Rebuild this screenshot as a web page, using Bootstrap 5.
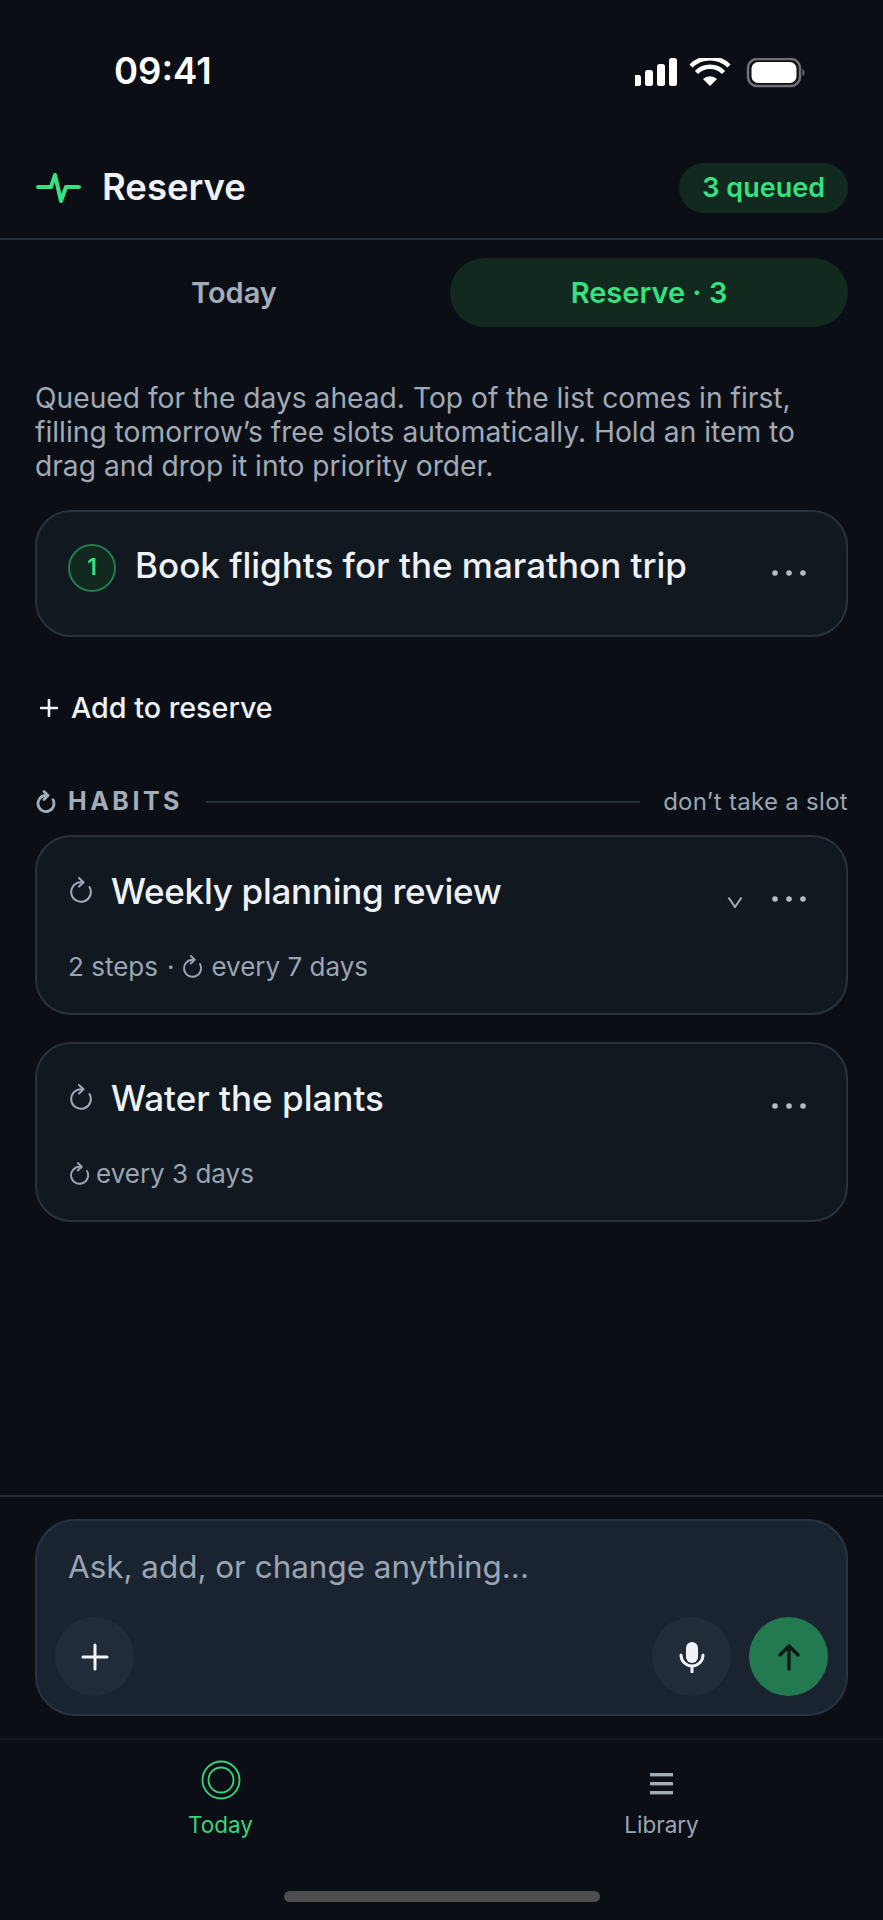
<!DOCTYPE html>
<html lang="en">
<head>
    <meta charset="UTF-8">
    <meta name="viewport" content="width=device-width, initial-scale=1.0">
    <title>Reserve</title>
    <link href="https://cdn.jsdelivr.net/npm/bootstrap@5.3.3/dist/css/bootstrap.min.css" rel="stylesheet">
    <style>
        html, body { height: 100%; }
        body {
            background-color: #0b0f15;
            font-family: Inter, "Liberation Sans", sans-serif;
            color: #f1f4f9;
        }
        .app-screen { height: 1920px; }
        .status-bar { height: 122px; padding: 20px 76px 0 114px; }
        .status-time { font-size: 36.5px; font-weight: 600; color: #fff; line-height: 1; }
        .status-icons { margin-top: 4px; }
        .app-header { height: 118px; padding: 16px 35px 0 36px; border-bottom: 2px solid #262e39; }
        .app-title { font-size: 36.5px; font-weight: 600; margin: 0 0 0 21px; color: #eef1f6; }
        .queued-pill {
            height: 50px; padding: 0 23px; font-size: 27px; font-weight: 600;
            color: #34e27f; background: #11291f; border-radius: 25px;
        }
        .tab-row { padding: 18px 35px 0 35px; gap: 20px; }
        .tab-item {
            height: 69px; flex: 1 1 0; font-size: 29px; font-weight: 600;
            color: #a3adba; border-radius: 35px; padding: 0 0 0 3px;
        }
        .tab-item.is-on { background: #11291f; color: #34e27f; padding: 0; }
        .tab-row .tab-item.is-on { flex: 0 0 398px; }
        .page-main { padding: 0 35px; flex: 1 1 0; min-height: 0; }
        .intro-text {
            font-size: 28.2px; line-height: 34.2px; color: #a0aab7; margin: 54px 0 0;
        }
        .task-card {
            background: #111820; border: 2px solid #2a323d; border-radius: 36px;
            padding: 0 39px 0 31px;
        }
        .first-card { height: 127px; margin-top: 26px; padding-top: 33px; }
        .habit-card { height: 180px; padding-top: 33px; margin-bottom: 27px; }
        .rank-dot {
            width: 48px; height: 48px; flex: 0 0 48px; border-radius: 50%;
            background: #11291f; border: 2px solid #237a50; color: #34e27f;
            font-size: 23px; font-weight: 600; margin: -1px 19px 0 0;
        }
        .task-title { font-size: 35px; font-weight: 500; color: #eef1f6; line-height: 42px; }
        .habit-card .title-tight { letter-spacing: -.28px; }
        .more-dots { width: 36px; height: 8px; margin-left: 0; flex: 0 0 auto; }
        .first-card .task-title { margin-top: -1px; }
        .first-card .more-dots { margin-top: 24px; }
        .habit-top .more-dots { margin-top: 25px; }
        .caret-mark { margin: 26px 28px 0 0; }
        .habit-icon { margin: 7px 18px 0 2px; }
        .add-row { margin-top: 52px; height: 38px; font-size: 28.7px; font-weight: 500; color: #eef1f6; }
        .add-row svg { margin: 0 13px 0 5px; }
        .habit-label { margin-top: 56px; margin-bottom: 14px; height: 38px; color: #a3adba; }
        .habit-label > svg { margin-left: 1px; }
        .habit-word { font-size: 25px; font-weight: 700; letter-spacing: 3.5px; margin-left: 12px; }
        .habit-line { height: 2px; background: #262e39; margin: 0 23px 0 23px; }
        .habit-note { font-size: 24px; color: #9aa5b3; letter-spacing: .3px; }
        .meta-row { margin-top: 39px; font-size: 26px; color: #9aa5b3; line-height: 32px; }
        .meta-row svg { margin: 0 8px 0 0; }
        .meta-row svg:first-child { margin: 0 6px 0 2px; }
        .meta-row .dot-gap { margin: 0 9px; }
        .composer-wrap { padding: 22px 35px; border-top: 2px solid #262e39; }
        .composer-box {
            height: 197px; background: #1a2330; border: 2px solid #2a3340;
            border-radius: 40px; padding: 0 18px 18px;
        }
        .composer-hint { font-size: 31.4px; color: #9aa5b3; padding: 27px 0 0 13px; line-height: 38px; }
        .round-btn {
            width: 79px; height: 79px; border-radius: 50%; background: #222c38; border: 0; padding: 0;
        }
        .round-btn.send-btn { background: #237a50; margin-left: 18px; }
        .tab-bar { height: 182px; border-top: 2px solid #141a22; padding-top: 20px; }
        .bar-item { width: 441px; font-size: 22.5px; line-height: 28px; color: #9aa5b3; }
        .bar-item.is-on { color: #34d67c; }
        .bar-icon { height: 40px; margin-bottom: 11px; }
        .home-bar { width: 316px; height: 11px; border-radius: 6px; background: #4d4d4d; margin: 52px auto 0; }
    </style>
</head>
<body>
    <div class="app-screen d-flex flex-column">

        <div class="status-bar d-flex justify-content-between align-items-center">
            <div class="status-time">09:41</div>
            <svg class="status-icons" width="172" height="30" viewBox="0 0 172 30">
                <g fill="#fff">
                    <rect x="-2" y="17" width="8" height="11" rx="2.5"/>
                    <rect x="10" y="12" width="8" height="16" rx="2.5"/>
                    <rect x="22" y="6" width="8" height="22" rx="2.5"/>
                    <rect x="34" y="0" width="8" height="28" rx="2.5"/>
                    <path d="M75 28l-7-7a10 10 0 0 1 14 0z"/>
                </g>
                <g fill="none" stroke="#fff" stroke-width="4.5">
                    <path d="M61.500 14.500a19 19 0 0 1 27 0"/>
                    <path d="M56 8a27 27 0 0 1 38 0"/>
                </g>
                <rect x="113" y="1" width="52" height="27" rx="9" fill="none" stroke="#6f7176" stroke-width="2.500"/>
                <rect x="116.500" y="4" width="45" height="21" rx="6.500" fill="#fff"/>
                <path d="M167.500 11c2.500 .8 2.500 6.200 0 7z" fill="#6f7176"/>
            </svg>
        </div>

        <header class="app-header d-flex align-items-center">
            <svg width="45" height="32" viewBox="0 0 45 32" fill="none" stroke="#34e27f" stroke-width="4" stroke-linecap="round" stroke-linejoin="round">
                <path d="M2 15h13l4-12 6 26 5-14h13"/>
            </svg>
            <h1 class="app-title">Reserve</h1>
            <div class="queued-pill d-flex align-items-center ms-auto">3 queued</div>
        </header>

        <nav class="tab-row d-flex">
            <div class="tab-item d-flex align-items-center justify-content-center">Today</div>
            <div class="tab-item is-on d-flex align-items-center justify-content-center">Reserve · 3</div>
        </nav>

        <main class="page-main">
            <p class="intro-text">Queued for the days ahead. Top of the list comes in first, filling tomorrow’s free slots automatically. Hold an item to drag and drop it into priority order.</p>

            <div class="task-card first-card d-flex align-items-start">
                <div class="rank-dot d-flex align-items-center justify-content-center">1</div>
                <div class="task-title flex-grow-1">Book flights for the marathon trip</div>
                <svg class="more-dots" viewBox="0 0 36 8" fill="#b4bcc8"><circle cx="4" cy="4" r="2.800"/><circle cx="18" cy="4" r="2.800"/><circle cx="32" cy="4" r="2.800"/></svg>
            </div>

            <div class="add-row d-flex align-items-center">
                <svg width="18" height="18" viewBox="0 0 18 18" stroke="#eef1f6" stroke-width="2.600" stroke-linecap="round"><path d="M9 1v16M1 9h16"/></svg>
                Add to reserve
            </div>

            <div class="habit-label d-flex align-items-center">
                <svg width="20" height="24" viewBox="0 0 20 24" fill="none" stroke="#a3adba" stroke-width="2.800" stroke-linecap="round" stroke-linejoin="round"><path d="M10 5.500a8 8 0 1 0 7 4.200"/><path d="M8 1.500l4 4-4 4"/></svg>
                <span class="habit-word">HABITS</span>
                <div class="habit-line flex-grow-1"></div>
                <span class="habit-note">don’t take a slot</span>
            </div>

            <div class="task-card habit-card">
                <div class="habit-top d-flex align-items-start">
                    <svg class="habit-icon" width="23" height="26" viewBox="0 0 23 26" fill="none" stroke="#a3adba" stroke-width="2" stroke-linecap="round" stroke-linejoin="round"><path d="M11 5.200a9.800 9.800 0 1 0 8.500 4.900"/><path d="M9 1l4.500 4.200L9 9.500"/></svg>
                    <div class="task-title title-tight flex-grow-1">Weekly planning review</div>
                    <svg class="caret-mark" width="16" height="12" viewBox="0 0 16 12" fill="none" stroke="#a3adba" stroke-width="2"><path d="M1.500 1.500L8 11l6.500-9.500"/></svg>
                    <svg class="more-dots" viewBox="0 0 36 8" fill="#b4bcc8"><circle cx="4" cy="4" r="2.800"/><circle cx="18" cy="4" r="2.800"/><circle cx="32" cy="4" r="2.800"/></svg>
                </div>
                <div class="meta-row d-flex align-items-center">
                    2 steps<span class="dot-gap">·</span>
                    <svg width="20" height="23" viewBox="0 0 23 26" fill="none" stroke="#9aa5b3" stroke-width="2.200" stroke-linecap="round" stroke-linejoin="round"><path d="M11 5.200a9.800 9.800 0 1 0 8.500 4.900"/><path d="M9 1l4.500 4.200L9 9.500"/></svg>
                    every 7 days
                </div>
            </div>

            <div class="task-card habit-card">
                <div class="habit-top d-flex align-items-start">
                    <svg class="habit-icon" width="23" height="26" viewBox="0 0 23 26" fill="none" stroke="#a3adba" stroke-width="2" stroke-linecap="round" stroke-linejoin="round"><path d="M11 5.200a9.800 9.800 0 1 0 8.500 4.900"/><path d="M9 1l4.500 4.200L9 9.500"/></svg>
                    <div class="task-title flex-grow-1">Water the plants</div>
                    <svg class="more-dots" viewBox="0 0 36 8" fill="#b4bcc8"><circle cx="4" cy="4" r="2.800"/><circle cx="18" cy="4" r="2.800"/><circle cx="32" cy="4" r="2.800"/></svg>
                </div>
                <div class="meta-row d-flex align-items-center">
                    <svg width="20" height="23" viewBox="0 0 23 26" fill="none" stroke="#9aa5b3" stroke-width="2.200" stroke-linecap="round" stroke-linejoin="round"><path d="M11 5.200a9.800 9.800 0 1 0 8.500 4.900"/><path d="M9 1l4.500 4.200L9 9.500"/></svg>
                    every 3 days
                </div>
            </div>
        </main>

        <div class="composer-wrap">
            <div class="composer-box d-flex flex-column justify-content-between">
                <div class="composer-hint">Ask, add, or change anything...</div>
                <div class="d-flex align-items-center">
                    <button class="round-btn d-flex align-items-center justify-content-center" type="button" aria-label="Add">
                        <svg width="28" height="28" viewBox="0 0 28 28" stroke="#f1f4f9" stroke-width="3" stroke-linecap="round"><path d="M14 2v24M2 14h24"/></svg>
                    </button>
                    <button class="round-btn d-flex align-items-center justify-content-center ms-auto" type="button" aria-label="Voice">
                        <svg width="26" height="32" viewBox="0 0 26 32" fill="none" stroke="#eef1f6" stroke-width="3" stroke-linecap="round"><rect x="7" y="1" width="12" height="21" rx="6" fill="#eef1f6" stroke="none"/><path d="M2 14a11 11 0 0 0 22 0M13 25v6"/></svg>
                    </button>
                    <button class="round-btn send-btn d-flex align-items-center justify-content-center" type="button" aria-label="Send">
                        <svg width="22" height="28" viewBox="0 0 22 28" fill="none" stroke="#0c1a14" stroke-width="3.400" stroke-linecap="round" stroke-linejoin="round"><path d="M11 26V3M2 12l9-9 9 9"/></svg>
                    </button>
                </div>
            </div>
        </div>

        <footer class="tab-bar">
            <div class="d-flex">
                <div class="bar-item is-on d-flex flex-column align-items-center">
                    <div class="bar-icon d-flex align-items-center">
                        <svg width="40" height="40" viewBox="0 0 40 40" fill="none" stroke="#34d67c" stroke-width="1.800"><circle cx="20" cy="20" r="18.500"/><circle cx="20" cy="20" r="12.500"/></svg>
                    </div>
                    Today
                </div>
                <div class="bar-item d-flex flex-column align-items-center">
                    <div class="bar-icon d-flex align-items-center">
                        <svg class="mt-2" width="23" height="22" viewBox="0 0 23 22" fill="#a3adba"><rect width="23" height="3.400" y="0"/><rect width="23" height="3.400" y="9"/><rect width="23" height="3.400" y="18"/></svg>
                    </div>
                    Library
                </div>
            </div>
            <div class="home-bar"></div>
        </footer>
    </div>
    <script src="https://cdn.jsdelivr.net/npm/bootstrap@5.3.3/dist/js/bootstrap.bundle.min.js"></script>
</body>
</html>
